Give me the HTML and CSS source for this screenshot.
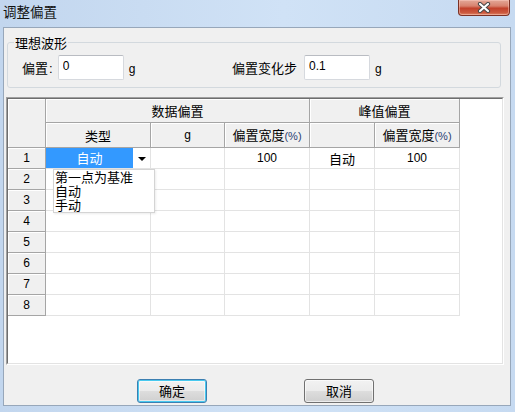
FILE: index.html
```html
<!DOCTYPE html>
<html lang="zh-CN">
<head>
<meta charset="utf-8">
<title>调整偏置</title>
<link rel="stylesheet" href="styles.css">
</head>
<body>
<div class="window">
  <div class="titlebar">
    <span class="title">调整偏置</span>
    <button class="close" type="button" aria-label="关闭">
      <svg width="14" height="11" viewBox="0 0 14 11"><path d="M3 2 L11 9 M11 2 L3 9" stroke="#474747" stroke-width="4.2" stroke-linecap="round"/><path d="M3 2 L11 9 M11 2 L3 9" stroke="#ffffff" stroke-width="2.2" stroke-linecap="round"/></svg>
    </button>
  </div>
  <div class="client">
    <fieldset class="group">
      <legend>理想波形</legend>
      <div class="params">
        <label class="field field-offset"><span>偏置<span class="colon">:</span></span><input class="edit" type="text" value="0"><span class="unit">g</span></label>
        <label class="field field-step"><span>偏置变化步</span><input class="edit" type="text" value="0.1"><span class="unit">g</span></label>
      </div>
    </fieldset>
    <div class="grid-outer">
      <div class="grid-inner">
        <table class="grid">
          <colgroup><col class="c0"><col class="c1"><col class="c2"><col class="c3"><col class="c4"><col class="c5"></colgroup>
          <thead>
            <tr class="h1"><th class="corner" rowspan="2"></th><th colspan="3">数据偏置</th><th colspan="2">峰值偏置</th></tr>
            <tr class="h2"><th>类型</th><th class="num">g</th><th>偏置宽度<span class="pct">(%)</span></th><th></th><th>偏置宽度<span class="pct">(%)</span></th></tr>
          </thead>
          <tbody>
            <tr><th class="rh">1</th><td class="combo-cell"><div class="combo"><span class="combo-val">自动</span><span class="combo-btn"><span class="tri"></span></span></div>
              <ul class="dropdown"><li>第一点为基准</li><li>自动</li><li>手动</li></ul></td><td></td><td class="num">100</td><td>自动</td><td class="num">100</td></tr>
            <tr><th class="rh">2</th><td></td><td></td><td></td><td></td><td></td></tr>
            <tr><th class="rh">3</th><td></td><td></td><td></td><td></td><td></td></tr>
            <tr><th class="rh">4</th><td></td><td></td><td></td><td></td><td></td></tr>
            <tr><th class="rh">5</th><td></td><td></td><td></td><td></td><td></td></tr>
            <tr><th class="rh">6</th><td></td><td></td><td></td><td></td><td></td></tr>
            <tr><th class="rh">7</th><td></td><td></td><td></td><td></td><td></td></tr>
            <tr><th class="rh">8</th><td></td><td></td><td></td><td></td><td></td></tr>
          </tbody>
        </table>
      </div>
    </div>
    <div class="buttons">
      <button class="btn btn-default" type="button">确定</button>
      <button class="btn" type="button">取消</button>
    </div>
  </div>
</div>
</body>
</html>
```
FILE: styles.css
```css
* { box-sizing: border-box; }
html, body { margin: 0; padding: 0; }
body {
  width: 515px;
  height: 412px;
  overflow: hidden;
  background: #c9dbef;
  font-family: "Noto Sans CJK SC", sans-serif;
  font-size: 13px;
  color: #000;
}
.window {
  width: 515px;
  height: 412px;
  display: flex;
  flex-direction: column;
  background: linear-gradient(90deg, #c2d6ee 0%, #d0e2f6 55%, #c6daf1 100%);
}
.titlebar {
  height: 27px;
  flex: none;
  display: flex;
  justify-content: space-between;
  align-items: flex-start;
  padding-left: 3px;
}
.title {
  font-size: 13.5px;
  line-height: 16px;
  padding-top: 3px;
  color: #111;
}
.close {
  width: 52px;
  height: 16px;
  margin: 0 5px 0 0;
  padding: 0;
  border: 1px solid #7b3125;
  border-top: none;
  border-radius: 0 0 4px 4px;
  background: linear-gradient(180deg, #e3a898 0%, #d8826e 40%, #c2412b 55%, #cc5a3f 85%, #e08a6a 100%);
  display: flex;
  align-items: center;
  justify-content: center;
  box-shadow: inset 0 0 0 1px rgba(255,210,200,.45);
}
.close svg { display: block; margin-top: -1px; }
.client {
  height: 379px;
  margin: 0 4px 0 3px;
  border: 1px solid #97a7ba;
  background: #f0f0f0;
  display: flex;
  flex-direction: column;
}
.group {
  margin: 6px 9px 0 3px;
  padding: 4px 8px 7px 6px;
  border: 1px solid #d3d9de;
  border-radius: 3px;
  min-width: 0;
}
.group legend {
  padding: 0 1px;
  line-height: 17px;
  font-size: 13px;
}
.params {
  display: flex;
  align-items: center;
  height: 25px;
  padding-left: 8px;
}
.field {
  display: flex;
  align-items: center;
  line-height: 17px;
}
.field-offset { width: 210px; }
.colon { font-family: "Liberation Sans", sans-serif; padding-left: 1px; }
.edit {
  width: 66px;
  height: 25px;
  margin: 0 0 0 5px;
  padding: 0 3px 3px 4px;
  border: 1px solid #d6d9de;
  border-top-color: #b9bcc2;
  border-radius: 2px;
  background: #fff;
  font-family: "Liberation Sans", sans-serif;
  font-size: 12px;
  color: #000;
  outline: none;
}
.field-step .edit { margin-left: 7px; width: 66px; }
.unit {
  margin-left: 5px;
  font-family: "Liberation Sans", sans-serif;
  font-size: 12px;
  padding-top: 3px;
}
.grid-outer {
  margin: 9px 6px 0 2px;
  border: 1px solid;
  border-color: #a0a0a0 #ffffff #ffffff #a0a0a0;
}
.grid-inner {
  height: 266px;
  border: 1px solid;
  border-color: #6e6e6e #e3e3e3 #e3e3e3 #6e6e6e;
  background: #fff;
}
.grid {
  border-collapse: separate;
  border-spacing: 0;
  table-layout: fixed;
  width: 452px;
}
.c0 { width: 38px; }
.c1 { width: 105px; }
.c2 { width: 74px; }
.c3 { width: 85px; }
.c4 { width: 65px; }
.c5 { width: 85px; }
.grid th, .grid td {
  padding: 0;
  border-right: 1px solid #e3e3e3;
  border-bottom: 1px solid #e3e3e3;
  text-align: center;
  vertical-align: middle;
  font-weight: normal;
  font-size: 13px;
  line-height: 17px;
  white-space: nowrap;
}
.grid thead th, .grid th.rh {
  background: #f0f0f0;
  border-right-color: #a5a5a5;
  border-bottom-color: #a5a5a5;
  box-shadow: inset 1px 1px 0 #ffffff;
}
.h1 { height: 24px; }
.h2 { height: 25px; }
.grid tbody tr { height: 21px; }
.num, .grid th.rh {
  font-family: "Liberation Sans", sans-serif;
}
.grid .num, .grid th.rh { font-size: 12px; }
.pct {
  font-family: "Liberation Sans", sans-serif;
  font-size: 11px;
  color: #2b3f73;
}
.combo-cell { position: relative; }
.combo {
  display: flex;
  height: 20px;
}
.combo-val {
  flex: 1;
  background: #3399ff;
  color: #fff;
  line-height: 20px;
}
.combo-btn {
  width: 17px;
  display: flex;
  align-items: center;
  justify-content: center;
  background: #fff;
}
.tri {
  width: 0;
  height: 0;
  border-left: 4px solid transparent;
  border-right: 4px solid transparent;
  border-top: 4px solid #000;
  margin-top: 1px;
}
.dropdown {
  position: absolute;
  left: 7px;
  top: 21px;
  z-index: 2;
  width: 102px;
  margin: 0;
  padding: 0;
  list-style: none;
  background: #fff;
  border: 1px solid #d4d4d4;
  box-shadow: 1px 1px 2px rgba(0,0,0,.08);
  text-align: left;
}
.dropdown li {
  padding-left: 1px;
  line-height: 14px;
  height: 14px;
  font-size: 13px;
}
.buttons {
  display: flex;
  gap: 97px;
  margin: 14px 0 0 133px;
}
.btn {
  width: 70px;
  height: 24px;
  margin: 0;
  padding: 0;
  border: 1px solid #707070;
  border-radius: 3px;
  background: linear-gradient(180deg, #f2f2f2 0%, #ebebeb 48%, #dddddd 52%, #cfcfcf 100%);
  box-shadow: inset 0 0 0 1px rgba(255,255,255,.6);
  font-family: "Noto Sans CJK SC", sans-serif;
  font-size: 13px;
  line-height: 20px;
  color: #000;
}
.btn-default {
  border-color: #3c7fb1;
  box-shadow: inset 0 0 0 1px #48c9ef, inset 0 0 0 2px rgba(255,255,255,.5);
}
```
